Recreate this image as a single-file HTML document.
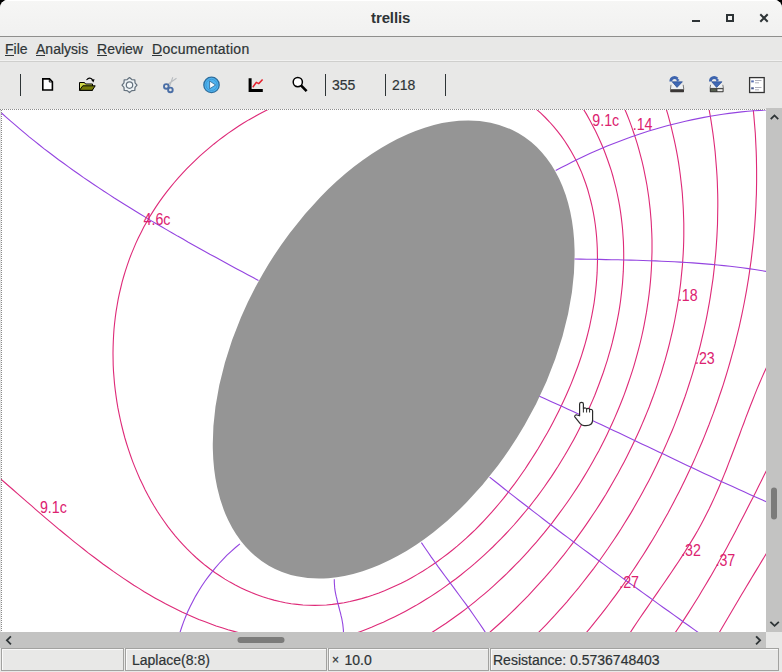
<!DOCTYPE html>
<html><head><meta charset="utf-8">
<style>
html,body{margin:0;padding:0;width:782px;height:672px;overflow:hidden;background:#000;}
body{position:relative;font-family:"Liberation Sans",sans-serif;color:#2e3436;-webkit-text-stroke:0.2px #2e3436;}
#win{position:absolute;left:0;top:0;width:782px;height:672px;background:#e8e8e7;border-radius:8px 8px 0 0;overflow:hidden;}
#title{position:absolute;left:0;top:0;width:782px;height:36px;background:linear-gradient(#f6f6f5,#f1f1f0);border-bottom:1px solid #8f8f8d;box-shadow:inset 0 1px 0 #fff;}
#title .t{position:absolute;left:371px;top:9px;font-weight:bold;font-size:15px;color:#2e3436;letter-spacing:-0.1px;-webkit-text-stroke:0;}
#menu{position:absolute;left:0;top:37px;width:782px;height:24px;background:#e8e8e7;border-bottom:1px solid #cfcfcd;box-shadow:inset 0 -1px 0 #f2f2f1;}
#menu span{position:absolute;top:4px;font-size:14px;color:#2e3436;}
#menu u{text-decoration:none;position:relative;}
#menu u:after{content:"";position:absolute;left:0;right:0;bottom:1px;height:1px;background:#2e3436;}
#tool{position:absolute;left:0;top:62px;width:782px;height:47px;background:#e8e8e7;}
.sep{position:absolute;top:74px;width:1px;height:22px;background:#2e3436;}
.num{position:absolute;top:77px;font-size:14px;color:#2e3436;}
#canvas{position:absolute;left:0;top:109px;width:766px;height:523px;background:#fff;}
#vs{position:absolute;left:766px;top:108px;width:16px;height:524px;background:#c3c3c2;}
#hs{position:absolute;left:0;top:632px;width:766px;height:16px;background:#c3c3c2;}
#corner{position:absolute;left:766px;top:632px;width:16px;height:16px;background:#e8e8e7;}
#status{position:absolute;left:0;top:648px;width:782px;height:24px;background:#e8e8e7;}
.cell{position:absolute;top:0px;height:21px;border:1px solid #a2a2a0;background:#e8e8e7;font-size:14px;line-height:20px;box-sizing:content-box;box-shadow:inset 1px 1px 0 #fafafa;}
.cell span{position:absolute;top:1px;}
svg{position:absolute;left:0;top:0;}
</style></head><body>
<div id="win">
 <div id="title"><span class="t">trellis</span></div>
 <div id="menu">
  <span style="left:5px"><u>F</u>ile</span>
  <span style="left:36px"><u>A</u>nalysis</span>
  <span style="left:97px"><u>R</u>eview</span>
  <span style="left:152px;letter-spacing:0.25px"><u>D</u>ocumentation</span>
 </div>
 <div id="tool"></div>
 <div class="sep" style="left:20px"></div>
 <div class="sep" style="left:325px"></div>
 <div class="sep" style="left:385px"></div>
 <div class="sep" style="left:445px"></div>
 <div class="num" style="left:332px">355</div>
 <div class="num" style="left:392px">218</div>

 <svg width="782" height="110" viewBox="0 0 782 110" style="position:absolute;left:0;top:0">
  <!-- title buttons -->
  <rect x="692" y="20" width="8" height="2" fill="#2e3436"/>
  <rect x="727" y="15" width="6" height="6" fill="none" stroke="#2e3436" stroke-width="2"/>
  <path d="M761,15 L767,21 M767,15 L761,21" stroke="#2e3436" stroke-width="2" stroke-linecap="square"/>
  <!-- new doc -->
  <path d="M42.8,78.9 L49.5,78.9 L52.4,81.8 L52.4,90 L42.8,90 Z" fill="#fff" stroke="#000" stroke-width="1.6" stroke-linejoin="miter"/>
  <path d="M49.3,79 L49.3,82 L52.3,82" fill="none" stroke="#000" stroke-width="0.9"/>
  <!-- open folder -->
  <path d="M79.5,82.5 L84.5,82.5 L85.5,84 L92.5,84 L92.5,90.3 L79.5,90.3 Z" fill="#d0d84a" stroke="#000" stroke-width="1"/>
  <path d="M79.5,90.3 L82.8,85.8 L95.2,85.8 L92.3,90.3 Z" fill="#767c08" stroke="#000" stroke-width="1"/>
  <path d="M86.5,80 Q89.5,76.5 92.6,79.6" fill="none" stroke="#000" stroke-width="1.1"/>
  <path d="M91,79.6 L94.6,79.2 L93.4,82.4 Z" fill="#000"/>
  <!-- gear -->
  <g transform="translate(129.5,85.1)" stroke="#66737f" stroke-width="1.25" stroke-linejoin="round">
   <path d="M0.00,-7.50 L2.30,-5.54 L5.30,-5.30 L5.54,-2.30 L7.50,0.00 L5.54,2.30 L5.30,5.30 L2.30,5.54 L0.00,7.50 L-2.30,5.54 L-5.30,5.30 L-5.54,2.30 L-7.50,0.00 L-5.54,-2.30 L-5.30,-5.30 L-2.30,-5.54 Z" fill="#eef3f6"/>
   <circle cx="0" cy="0" r="3.2" fill="#f4f8fa"/>
  </g>
  <!-- scissors -->
  <path d="M167.5,84.5 L176.5,78.2 M169.5,86.5 L172.8,77.2" stroke="#b8bcc0" stroke-width="1.1" fill="none"/>
  <circle cx="166.3" cy="86.4" r="2.3" fill="none" stroke="#4a6ea6" stroke-width="1.9"/>
  <circle cx="170.4" cy="89.9" r="2.3" fill="none" stroke="#4a6ea6" stroke-width="1.9"/>
  <!-- play -->
  <circle cx="211.5" cy="84.9" r="7.7" fill="#4fb3ef" stroke="#2f6f9e" stroke-width="1.3"/>
  <circle cx="211.5" cy="84.9" r="5.6" fill="none" stroke="#3d9ad6" stroke-width="1"/>
  <path d="M209.6,81 L215.6,85 L209.6,88.8 Z" fill="#f4fbff" stroke="#2d6590" stroke-width="0.8" stroke-linejoin="round"/>
  <!-- chart -->
  <path d="M250.1,78.2 L250.1,90.4 L262.8,90.4" fill="none" stroke="#000" stroke-width="3"/>
  <path d="M252.8,87.3 L256.3,82.4 L258.8,83.6 L262.6,79.5" fill="none" stroke="#e4202c" stroke-width="1.5"/>
  <!-- magnifier -->
  <circle cx="297.8" cy="82.1" r="4.6" fill="#fff" stroke="#000" stroke-width="1.5"/>
  <path d="M301,85.3 L306.6,91.1" stroke="#000" stroke-width="2.6"/>
  <!-- save 1 -->
  <g transform="translate(0,0)">
   <path d="M671,84.8 L670.4,89.6 L683.8,89.6 L683.2,84.8" fill="#eef0f2" stroke="#6a6a6a" stroke-width="0.9"/>
   <rect x="670.2" y="89.4" width="13.8" height="2.8" rx="0.6" fill="#3b3736"/>
   <path d="M670.8,81.4 C670.8,78 674.5,76.2 677.6,78.8" fill="none" stroke="#3d64ae" stroke-width="2.8"/>
   <path d="M672.2,81.8 L682.4,81.8 L677,87.4 Z" fill="#3f68b4" stroke="#2a4c90" stroke-width="0.7" stroke-linejoin="round"/>
   <path d="M676.2,77.6 L679.6,80 L676.8,82" fill="#3f68b4"/>
  </g>
  <!-- save 2 -->
  <g transform="translate(39.6,0)">
   <path d="M671,84.8 L670.4,88.4 L683.8,88.4 L683.2,84.8" fill="#eef0f2" stroke="#6a6a6a" stroke-width="0.9"/>
   <rect x="670.2" y="88.2" width="13.8" height="4" rx="0.6" fill="#3b3b39"/>
   <rect x="671.4" y="89.2" width="5.4" height="2" fill="#56604f"/>
   <rect x="677.8" y="89.2" width="5.2" height="2" fill="#f2f2f2"/>
   <path d="M670.8,81.4 C670.8,78 674.5,76.2 677.6,78.8" fill="none" stroke="#3d64ae" stroke-width="2.8"/>
   <path d="M672.2,81.8 L682.4,81.8 L677,87.4 Z" fill="#3f68b4" stroke="#2a4c90" stroke-width="0.7" stroke-linejoin="round"/>
   <path d="M676.2,77.6 L679.6,80 L676.8,82" fill="#3f68b4"/>
  </g>
  <!-- list -->
  <rect x="749.6" y="77.6" width="14.6" height="14.9" fill="#fff" stroke="#333" stroke-width="1.3"/>
  <rect x="751.2" y="80.4" width="2.6" height="2" fill="#5a70b0"/>
  <rect x="751.2" y="87.3" width="2.6" height="2" fill="#4a5a90"/>
  <path d="M755,80.5 L761.5,80.5 M755,82.8 L759,82.8 M755,87.5 L761.5,87.5 M755,89.8 L759,89.8" stroke="#9a9aa8" stroke-width="0.8"/>
 </svg>
 <div id="canvas"></div>
 <div id="vs"></div>
 <div id="hs"></div>
 <div id="corner"></div>

 <svg width="782" height="672" viewBox="0 0 782 672" style="position:absolute;left:0;top:0">
  <g fill="none" stroke="#2e3436" stroke-width="1.8" stroke-linecap="square">
   <path d="M771.4,118.5 L774.5,115.4 L777.6,118.5"/>
   <path d="M771,622.4 L774.6,625.8 L778.2,622.4"/>
   <path d="M10.3,636.9 L6.9,640.3 L10.3,643.7"/>
   <path d="M756.7,636.9 L760.1,640.3 L756.7,643.7"/>
  </g>
  <rect x="771" y="487.5" width="6" height="32" rx="3" fill="#7b7b7a"/>
  <rect x="237.5" y="637" width="47" height="6" rx="3" fill="#7b7b7a"/>
 </svg>
 <div id="status">
  <div class="cell" style="left:1px;width:121px"></div>
  <div class="cell" style="left:125px;width:200px"><span style="left:6px">Laplace(8:8)</span></div>
  <div class="cell" style="left:328px;width:159px"><span style="left:3px;font-size:12px;top:1px">&#215;</span><span style="left:15.5px">10.0</span></div>
  <div class="cell" style="left:490px;width:287px"><span style="left:2px">Resistance: 0.5736748403</span></div>
 </div>
 <svg width="782" height="672" viewBox="0 0 782 672">
  <defs><clipPath id="cc"><rect x="0" y="110" width="766" height="522"/></clipPath></defs>
  <g clip-path="url(#cc)">
   <ellipse cx="393.7" cy="349.5" rx="249.7" ry="151.2" transform="rotate(-60 393.7 349.5)" fill="#959595"/>
   <g fill="none" stroke-width="1.1">
<path d="M536.1,109.0 L540.8,113.2 L545.3,117.5 L549.6,122.0 L553.7,126.6 L557.6,131.3 L561.3,136.1 L564.7,141.0 L568.0,146.1 L571.1,151.2 L574.0,156.4 L576.8,161.8 L579.3,167.2 L581.7,172.6 L583.8,178.2 L585.8,183.8 L587.7,189.5 L589.3,195.3 L590.8,201.0 L592.2,206.9 L593.4,212.8 L594.4,218.7 L595.3,224.7 L596.0,230.6 L596.6,236.7 L597.0,242.7 L597.3,248.7 L597.4,254.8 L597.5,260.8 L597.3,266.8 L597.1,272.9 L596.7,278.9 L596.2,284.9 L595.6,290.9 L594.9,296.8 L594.1,302.8 L593.1,308.7 L592.0,314.6 L590.8,320.5 L589.6,326.3 L588.2,332.2 L586.7,338.0 L585.1,343.8 L583.4,349.5 L581.6,355.3 L579.7,361.0 L577.7,366.7 L575.6,372.3 L573.4,378.0 L571.2,383.6 L568.8,389.2 L566.4,394.7 L563.9,400.2 L561.3,405.7 L558.7,411.2 L556.0,416.6 L553.2,422.0 L550.3,427.4 L547.4,432.7 L544.3,438.0 L541.3,443.2 L538.2,448.5 L535.0,453.6 L531.7,458.8 L528.4,463.9 L525.1,469.0 L521.6,474.0 L518.1,479.0 L514.6,483.9 L510.9,488.7 L507.2,493.6 L503.5,498.3 L499.6,503.0 L495.7,507.6 L491.8,512.2 L487.7,516.7 L483.6,521.1 L479.4,525.5 L475.1,529.8 L470.7,534.0 L466.3,538.1 L461.8,542.1 L457.2,546.1 L452.5,550.0 L447.8,553.7 L442.9,557.4 L438.0,561.0 L433.0,564.5 L427.9,567.9 L422.7,571.2 L417.4,574.4 L412.1,577.4 L406.7,580.4 L401.2,583.2 L395.7,585.8 L390.1,588.3 L384.5,590.7 L378.9,592.9 L373.1,595.0 L367.4,596.9 L361.6,598.6 L355.8,600.1 L350.0,601.5 L344.1,602.7 L338.2,603.6 L332.4,604.4 L326.5,605.0 L320.6,605.3 L314.7,605.4 L308.8,605.3 L302.9,605.0 L297.1,604.4 L291.2,603.7 L285.4,602.7 L279.7,601.5 L273.9,600.1 L268.2,598.5 L262.6,596.7 L257.0,594.7 L251.4,592.6 L246.0,590.2 L240.6,587.7 L235.3,585.0 L230.0,582.1 L224.9,579.1 L219.8,575.8 L214.8,572.5 L210.0,569.0 L205.2,565.3 L200.6,561.5 L196.0,557.5 L191.6,553.4 L187.3,549.2 L183.2,544.8 L179.1,540.4 L175.2,535.8 L171.4,531.1 L167.7,526.3 L164.1,521.3 L160.6,516.3 L157.3,511.2 L154.1,506.0 L151.0,500.7 L148.0,495.3 L145.2,489.9 L142.5,484.3 L139.8,478.7 L137.4,473.1 L135.0,467.4 L132.7,461.6 L130.6,455.8 L128.6,449.9 L126.7,444.0 L124.9,438.0 L123.3,432.0 L121.8,426.0 L120.4,420.0 L119.1,413.9 L117.9,407.9 L116.9,401.8 L116.0,395.7 L115.2,389.6 L114.5,383.6 L114.0,377.5 L113.5,371.4 L113.2,365.3 L113.1,359.3 L113.0,353.2 L113.1,347.2 L113.3,341.2 L113.6,335.2 L114.0,329.2 L114.6,323.2 L115.3,317.3 L116.1,311.4 L117.1,305.5 L118.1,299.6 L119.3,293.8 L120.7,288.0 L122.1,282.2 L123.7,276.5 L125.4,270.9 L127.3,265.2 L129.2,259.6 L131.3,254.1 L133.6,248.6 L135.9,243.1 L138.4,237.7 L141.1,232.4 L143.8,227.1 L146.7,221.9 L149.7,216.7 L152.9,211.6 L156.1,206.6 L159.5,201.6 L163.1,196.7 L166.7,191.9 L170.5,187.1 L174.3,182.5 L178.3,177.9 L182.4,173.4 L186.6,168.9 L190.9,164.6 L195.3,160.3 L199.7,156.1 L204.3,152.1 L209.0,148.1 L213.7,144.2 L218.5,140.4 L223.4,136.7 L228.3,133.1 L233.3,129.7 L238.4,126.3 L243.5,123.0 L248.7,119.9 L254.0,116.9 L259.3,114.0 L264.6,111.2 L270.0,108.5" stroke="#de2a78"/>
<path d="M583.3,109.0 L586.6,114.4 L589.7,119.9 L592.6,125.4 L595.5,131.0 L598.1,136.6 L600.7,142.2 L603.1,147.8 L605.3,153.5 L607.4,159.2 L609.4,165.0 L611.3,170.7 L613.0,176.5 L614.5,182.3 L616.0,188.2 L617.3,194.0 L618.5,199.9 L619.6,205.8 L620.5,211.7 L621.3,217.6 L622.0,223.6 L622.6,229.5 L623.0,235.5 L623.4,241.4 L623.6,247.4 L623.7,253.4 L623.7,259.4 L623.5,265.4 L623.3,271.4 L622.9,277.4 L622.5,283.4 L621.9,289.3 L621.2,295.3 L620.5,301.3 L619.6,307.3 L618.6,313.3 L617.5,319.2 L616.3,325.2 L615.0,331.1 L613.6,337.0 L612.2,342.9 L610.6,348.8 L608.9,354.7 L607.2,360.6 L605.3,366.4 L603.4,372.2 L601.3,378.0 L599.2,383.7 L597.0,389.5 L594.8,395.2 L592.4,400.9 L589.9,406.5 L587.4,412.1 L584.8,417.7 L582.1,423.3 L579.4,428.8 L576.6,434.3 L573.7,439.7 L570.7,445.1 L567.6,450.5 L564.5,455.8 L561.3,461.0 L558.1,466.3 L554.8,471.4 L551.4,476.6 L547.9,481.6 L544.4,486.7 L540.8,491.7 L537.2,496.6 L533.4,501.5 L529.7,506.3 L525.8,511.0 L521.9,515.7 L517.9,520.4 L513.9,525.0 L509.8,529.5 L505.6,534.0 L501.4,538.4 L497.1,542.7 L492.8,547.0 L488.4,551.2 L483.9,555.3 L479.4,559.4 L474.9,563.4 L470.2,567.3 L465.5,571.2 L460.8,575.0 L456.0,578.7 L451.1,582.3 L446.2,585.9 L441.3,589.4 L436.3,592.8 L431.2,596.1 L426.1,599.3 L420.9,602.5 L415.7,605.6 L410.4,608.5 L405.1,611.4 L399.7,614.3 L394.3,617.0 L388.8,619.6 L383.3,622.2 L377.7,624.6 L372.1,627.0 L366.5,629.2 L360.8,631.4 L355.0,633.5" stroke="#de2a78"/>
<path d="M-1.0,477.5 L3.6,481.5 L8.2,485.5 L12.8,489.5 L17.5,493.6 L22.1,497.6 L26.7,501.7 L31.4,505.7 L36.1,509.8 L40.8,513.8 L45.4,517.8 L50.2,521.8 L54.9,525.8 L59.6,529.8 L64.4,533.7 L69.2,537.7 L74.0,541.6 L78.8,545.4 L83.7,549.3 L88.5,553.1 L93.4,556.8 L98.4,560.5 L103.3,564.2 L108.3,567.8 L113.3,571.4 L118.4,574.9 L123.5,578.4 L128.6,581.8 L133.8,585.2 L139.0,588.4 L144.2,591.7 L149.4,594.8 L154.8,597.9 L160.1,600.8 L165.5,603.8 L170.9,606.6 L176.4,609.3 L181.9,612.0 L187.5,614.5 L193.1,617.0 L198.8,619.4 L204.5,621.6 L210.3,623.8 L216.1,625.9 L222.0,627.8 L228.0,629.7 L234.0,631.4 L240.0,633.0" stroke="#de2a78"/>
<path d="M624.7,109.0 L627.1,114.8 L629.4,120.6 L631.5,126.4 L633.5,132.2 L635.5,138.1 L637.3,143.9 L639.0,149.8 L640.6,155.8 L642.1,161.7 L643.5,167.6 L644.7,173.6 L645.9,179.6 L647.0,185.5 L647.9,191.5 L648.8,197.5 L649.5,203.6 L650.2,209.6 L650.7,215.6 L651.2,221.6 L651.5,227.7 L651.8,233.7 L652.0,239.8 L652.0,245.8 L652.0,251.9 L651.8,257.9 L651.6,263.9 L651.3,270.0 L650.9,276.0 L650.4,282.1 L649.8,288.1 L649.1,294.1 L648.3,300.1 L647.4,306.2 L646.5,312.2 L645.4,318.1 L644.3,324.1 L643.1,330.1 L641.8,336.0 L640.4,342.0 L638.9,347.9 L637.3,353.8 L635.7,359.7 L634.0,365.6 L632.2,371.4 L630.3,377.2 L628.3,383.0 L626.3,388.8 L624.2,394.6 L622.0,400.3 L619.7,406.0 L617.3,411.7 L614.9,417.4 L612.4,423.0 L609.8,428.6 L607.2,434.2 L604.5,439.7 L601.7,445.2 L598.9,450.7 L595.9,456.1 L592.9,461.5 L589.9,466.8 L586.7,472.2 L583.6,477.4 L580.3,482.7 L577.0,487.9 L573.6,493.0 L570.1,498.2 L566.6,503.2 L563.0,508.3 L559.4,513.2 L555.7,518.2 L552.0,523.1 L548.1,527.9 L544.3,532.7 L540.3,537.4 L536.4,542.1 L532.3,546.7 L528.2,551.3 L524.1,555.8 L519.9,560.3 L515.6,564.7 L511.3,569.0 L507.0,573.3 L502.6,577.5 L498.1,581.7 L493.6,585.8 L489.1,589.9 L484.5,593.8 L479.8,597.7 L475.1,601.6 L470.4,605.4 L465.6,609.1 L460.8,612.7 L455.9,616.3 L451.0,619.8 L446.1,623.2 L441.1,626.5 L436.1,629.8 L431.0,633.0" stroke="#de2a78"/>
<path d="M666.2,109.0 L668.0,114.9 L669.6,120.9 L671.2,126.9 L672.6,132.9 L674.0,138.9 L675.3,144.9 L676.5,150.9 L677.6,156.9 L678.6,162.9 L679.5,169.0 L680.3,175.0 L681.0,181.0 L681.7,187.1 L682.3,193.1 L682.7,199.2 L683.1,205.2 L683.4,211.3 L683.6,217.3 L683.8,223.4 L683.8,229.4 L683.8,235.5 L683.7,241.5 L683.5,247.5 L683.2,253.6 L682.8,259.6 L682.4,265.6 L681.8,271.6 L681.2,277.6 L680.6,283.6 L679.8,289.6 L679.0,295.6 L678.1,301.6 L677.1,307.6 L676.0,313.5 L674.9,319.5 L673.7,325.4 L672.4,331.3 L671.0,337.2 L669.6,343.1 L668.1,349.0 L666.5,354.8 L664.9,360.7 L663.1,366.5 L661.4,372.3 L659.5,378.1 L657.6,383.8 L655.6,389.6 L653.6,395.3 L651.4,401.0 L649.3,406.7 L647.0,412.4 L644.7,418.0 L642.3,423.6 L639.9,429.2 L637.4,434.8 L634.8,440.3 L632.2,445.8 L629.5,451.3 L626.8,456.8 L624.0,462.2 L621.1,467.6 L618.2,473.0 L615.2,478.3 L612.2,483.6 L609.1,488.9 L606.0,494.2 L602.8,499.4 L599.5,504.6 L596.2,509.7 L592.8,514.8 L589.4,519.9 L586.0,524.9 L582.5,529.9 L578.9,534.9 L575.3,539.8 L571.6,544.7 L567.9,549.5 L564.2,554.3 L560.3,559.1 L556.5,563.8 L552.6,568.5 L548.6,573.1 L544.7,577.7 L540.6,582.2 L536.5,586.7 L532.4,591.2 L528.3,595.6 L524.1,599.9 L519.8,604.2 L515.5,608.5 L511.2,612.7 L506.8,616.9 L502.4,621.0 L498.0,625.0 L493.5,629.0 L489.0,633.0" stroke="#de2a78"/>
<path d="M709.0,109.0 L710.1,115.0 L711.1,121.1 L712.0,127.1 L712.9,133.2 L713.7,139.3 L714.4,145.3 L715.1,151.4 L715.6,157.5 L716.1,163.6 L716.6,169.7 L717.0,175.7 L717.3,181.8 L717.5,187.9 L717.7,194.0 L717.8,200.1 L717.8,206.2 L717.7,212.3 L717.6,218.3 L717.5,224.4 L717.2,230.5 L716.9,236.6 L716.5,242.6 L716.1,248.7 L715.6,254.7 L715.0,260.8 L714.4,266.8 L713.7,272.9 L713.0,278.9 L712.1,284.9 L711.2,290.9 L710.3,296.9 L709.3,302.9 L708.2,308.9 L707.1,314.9 L705.9,320.8 L704.6,326.8 L703.3,332.7 L701.9,338.6 L700.5,344.6 L699.0,350.5 L697.4,356.3 L695.8,362.2 L694.1,368.0 L692.4,373.9 L690.6,379.7 L688.7,385.5 L686.8,391.3 L684.9,397.0 L682.8,402.8 L680.7,408.5 L678.6,414.2 L676.4,419.9 L674.2,425.6 L671.9,431.2 L669.5,436.8 L667.1,442.4 L664.6,448.0 L662.1,453.6 L659.5,459.1 L656.9,464.6 L654.2,470.1 L651.5,475.5 L648.7,480.9 L645.8,486.3 L642.9,491.7 L640.0,497.0 L637.0,502.3 L634.0,507.6 L630.9,512.9 L627.7,518.1 L624.5,523.3 L621.3,528.5 L618.0,533.6 L614.6,538.7 L611.2,543.7 L607.8,548.8 L604.3,553.8 L600.8,558.7 L597.2,563.7 L593.6,568.6 L589.9,573.4 L586.2,578.2 L582.4,583.0 L578.6,587.8 L574.7,592.5 L570.8,597.1 L566.9,601.8 L562.9,606.3 L558.8,610.9 L554.8,615.4 L550.6,619.9 L546.5,624.3 L542.3,628.7 L538.0,633.0" stroke="#de2a78"/>
<path d="M753.2,109.0 L753.8,115.1 L754.3,121.2 L754.8,127.2 L755.3,133.3 L755.6,139.4 L755.9,145.5 L756.2,151.6 L756.4,157.7 L756.5,163.7 L756.6,169.8 L756.6,175.9 L756.6,182.0 L756.5,188.0 L756.4,194.1 L756.1,200.2 L755.9,206.3 L755.6,212.3 L755.2,218.4 L754.8,224.4 L754.3,230.5 L753.8,236.5 L753.2,242.6 L752.5,248.6 L751.8,254.6 L751.1,260.6 L750.2,266.6 L749.4,272.6 L748.5,278.6 L747.5,284.6 L746.5,290.6 L745.4,296.6 L744.3,302.5 L743.1,308.5 L741.9,314.4 L740.6,320.4 L739.3,326.3 L737.9,332.2 L736.4,338.1 L735.0,344.0 L733.4,349.8 L731.8,355.7 L730.2,361.5 L728.5,367.3 L726.8,373.2 L725.0,379.0 L723.2,384.8 L721.3,390.5 L719.3,396.3 L717.4,402.0 L715.3,407.7 L713.3,413.4 L711.1,419.1 L709.0,424.8 L706.7,430.5 L704.5,436.1 L702.2,441.7 L699.8,447.3 L697.4,452.9 L695.0,458.4 L692.5,464.0 L689.9,469.5 L687.3,475.0 L684.7,480.5 L682.0,485.9 L679.3,491.4 L676.5,496.8 L673.7,502.2 L670.9,507.5 L668.0,512.9 L665.0,518.2 L662.1,523.5 L659.0,528.7 L656.0,534.0 L652.9,539.2 L649.7,544.4 L646.5,549.6 L643.3,554.7 L640.0,559.8 L636.7,564.9 L633.3,570.0 L629.9,575.0 L626.5,580.0 L623.0,585.0 L619.5,589.9 L615.9,594.8 L612.3,599.7 L608.7,604.5 L605.0,609.4 L601.3,614.2 L597.5,618.9 L593.7,623.6 L589.9,628.3 L586.0,633.0" stroke="#de2a78"/>
<path d="M767.0,366.5 L764.4,372.0 L761.9,377.6 L759.5,383.3 L757.1,388.9 L754.8,394.6 L752.6,400.3 L750.3,406.0 L748.1,411.7 L745.9,417.4 L743.8,423.2 L741.6,428.9 L739.5,434.7 L737.3,440.5 L735.2,446.2 L733.0,452.0 L730.8,457.7 L728.6,463.4 L726.4,469.2 L724.1,474.9 L721.8,480.5 L719.4,486.2 L717.0,491.8 L714.5,497.4 L711.9,503.0 L709.3,508.5 L706.5,514.0 L703.7,519.5 L700.8,524.9 L697.9,530.3 L694.8,535.6 L691.6,540.9 L688.4,546.1 L685.2,551.4 L681.8,556.6 L678.5,561.7 L675.0,566.9 L671.6,572.0 L668.1,577.1 L664.6,582.2 L661.1,587.3 L657.6,592.4 L654.1,597.4 L650.6,602.5 L647.1,607.6 L643.6,612.6 L640.1,617.7 L636.7,622.8 L633.3,627.9 L630.0,633.0" stroke="#de2a78"/>
<path d="M767.0,469.5 L764.2,475.1 L761.4,480.7 L758.6,486.3 L755.8,491.9 L753.0,497.5 L750.1,503.1 L747.3,508.6 L744.4,514.2 L741.5,519.8 L738.6,525.3 L735.7,530.9 L732.8,536.4 L729.8,541.9 L726.9,547.4 L723.9,552.9 L720.8,558.3 L717.8,563.8 L714.7,569.2 L711.6,574.7 L708.4,580.1 L705.2,585.5 L702.0,590.8 L698.8,596.2 L695.5,601.5 L692.2,606.8 L688.8,612.1 L685.4,617.4 L682.0,622.6 L678.5,627.8 L675.0,633.0" stroke="#de2a78"/>
<path d="M767.0,552.5 L764.4,556.7 L761.9,560.9 L759.3,565.2 L756.8,569.4 L754.2,573.6 L751.7,577.8 L749.1,582.1 L746.6,586.3 L744.1,590.5 L741.5,594.8 L739.0,599.0 L736.5,603.2 L734.0,607.5 L731.5,611.7 L729.0,616.0 L726.5,620.2 L724.0,624.5 L721.5,628.7 L719.0,633.0" stroke="#de2a78"/>
<path d="M1.5,113.0 L6.1,117.1 L10.7,121.2 L15.4,125.2 L20.0,129.2 L24.8,133.2 L29.5,137.1 L34.3,140.9 L39.1,144.8 L43.9,148.6 L48.8,152.3 L53.7,156.0 L58.6,159.7 L63.6,163.3 L68.5,166.9 L73.5,170.5 L78.6,174.0 L83.6,177.6 L88.7,181.0 L93.8,184.5 L98.9,187.9 L104.0,191.3 L109.2,194.6 L114.3,198.0 L119.5,201.3 L124.7,204.5 L130.0,207.8 L135.2,211.0 L140.5,214.2 L145.7,217.4 L151.0,220.6 L156.3,223.7 L161.6,226.8 L166.9,229.9 L172.3,233.0 L177.6,236.1 L183.0,239.1 L188.3,242.2 L193.7,245.2 L199.1,248.2 L204.5,251.2 L209.8,254.2 L215.2,257.1 L220.6,260.1 L226.0,263.0 L231.4,266.0 L236.9,268.9 L242.3,271.8 L247.7,274.7 L253.1,277.6 L258.5,280.5" stroke="#9444e0"/>
<path d="M239.9,543.8 L235.5,547.5 L231.2,551.3 L227.0,555.2 L223.0,559.3 L219.1,563.5 L215.3,567.9 L211.7,572.3 L208.2,576.9 L204.8,581.5 L201.6,586.3 L198.5,591.2 L195.6,596.1 L192.9,601.2 L190.3,606.3 L187.8,611.5 L185.6,616.8 L183.5,622.1 L181.6,627.5 L179.8,633.0" stroke="#9444e0"/>
<path d="M334.3,579.2 L334.3,582.1 L334.5,585.0 L334.7,587.9 L335.1,590.8 L335.6,593.6 L336.2,596.4 L336.9,599.2 L337.5,602.0 L338.3,604.8 L339.0,607.5 L339.7,610.3 L340.5,613.1 L341.1,615.9 L341.8,618.7 L342.3,621.5 L342.8,624.4 L343.1,627.2 L343.4,630.1 L343.5,633.0" stroke="#9444e0"/>
<path d="M421.4,542.6 L424.7,547.5 L428.0,552.3 L431.3,557.1 L434.7,561.8 L438.1,566.6 L441.6,571.3 L445.0,576.0 L448.5,580.7 L452.0,585.4 L455.5,590.1 L458.9,594.8 L462.4,599.5 L465.9,604.2 L469.3,608.9 L472.7,613.7 L476.0,618.5 L479.3,623.3 L482.6,628.1 L485.8,633.0" stroke="#9444e0"/>
<path d="M539.4,396.3 L545.1,398.8 L550.9,401.4 L556.6,404.0 L562.3,406.6 L568.0,409.2 L573.7,411.8 L579.4,414.4 L585.1,417.1 L590.8,419.7 L596.5,422.4 L602.1,425.0 L607.8,427.7 L613.5,430.4 L619.2,433.1 L624.8,435.8 L630.5,438.5 L636.2,441.2 L641.8,443.9 L647.5,446.6 L653.2,449.3 L658.8,452.0 L664.5,454.6 L670.1,457.3 L675.8,460.0 L681.5,462.7 L687.2,465.4 L692.8,468.1 L698.5,470.8 L704.2,473.4 L709.9,476.1 L715.6,478.7 L721.2,481.4 L726.9,484.0 L732.6,486.6 L738.4,489.2 L744.1,491.8 L749.8,494.4 L755.5,496.9 L761.3,499.5 L767.0,502.0" stroke="#9444e0"/>
<path d="M489.6,477.1 L494.5,481.0 L499.3,484.8 L504.2,488.7 L509.1,492.6 L514.0,496.4 L518.9,500.2 L523.8,504.0 L528.7,507.8 L533.6,511.6 L538.6,515.4 L543.5,519.2 L548.4,523.0 L553.4,526.7 L558.3,530.5 L563.3,534.2 L568.3,537.9 L573.3,541.7 L578.2,545.4 L583.2,549.1 L588.2,552.8 L593.2,556.5 L598.2,560.2 L603.2,563.9 L608.2,567.6 L613.2,571.2 L618.3,574.9 L623.3,578.6 L628.3,582.2 L633.4,585.9 L638.4,589.5 L643.4,593.1 L648.5,596.8 L653.5,600.4 L658.6,604.1 L663.6,607.7 L668.7,611.3 L673.7,614.9 L678.8,618.5 L683.8,622.2 L688.9,625.8 L693.9,629.4 L699.0,633.0" stroke="#9444e0"/>
<path d="M574.5,259.0 L580.7,259.1 L586.9,259.2 L593.2,259.3 L599.4,259.4 L605.6,259.6 L611.9,259.7 L618.1,259.8 L624.3,260.0 L630.5,260.1 L636.8,260.3 L643.0,260.5 L649.2,260.7 L655.5,260.9 L661.7,261.2 L667.9,261.5 L674.1,261.8 L680.3,262.1 L686.6,262.5 L692.8,262.9 L699.0,263.4 L705.2,263.9 L711.4,264.4 L717.6,265.0 L723.8,265.6 L730.0,266.3 L736.2,267.0 L742.3,267.8 L748.5,268.6 L754.7,269.5 L760.8,270.5 L767.0,271.5" stroke="#9444e0"/>
<path d="M555.7,170.6 L561.3,167.6 L567.0,164.7 L572.6,161.8 L578.3,159.0 L584.1,156.3 L589.8,153.6 L595.6,151.1 L601.4,148.6 L607.2,146.1 L613.1,143.7 L619.0,141.5 L624.9,139.2 L630.9,137.1 L636.8,135.0 L642.8,133.0 L648.8,131.1 L654.9,129.3 L660.9,127.5 L667.0,125.8 L673.1,124.2 L679.3,122.7 L685.4,121.2 L691.6,119.9 L697.8,118.6 L704.0,117.4 L710.2,116.3 L716.4,115.2 L722.7,114.3 L729.0,113.4 L735.3,112.6 L741.6,111.9 L747.9,111.3 L754.3,110.8 L760.6,110.4 L767.0,110.0" stroke="#9444e0"/>
   </g>
   <g fill="#dc2270" font-size="13.5" font-family="Liberation Sans, sans-serif">
<text transform="translate(143.60,225.30) scale(0.900,1)" font-size="15.80">4.6c</text>
<text transform="translate(592.32,126.10) scale(0.900,1)" font-size="15.80">9.1c</text>
<text transform="translate(632.74,129.80) scale(0.900,1)" font-size="15.80">.14</text>
<text transform="translate(677.91,300.90) scale(0.900,1)" font-size="15.80">.18</text>
<text transform="translate(694.99,363.80) scale(0.900,1)" font-size="15.80">.23</text>
<text transform="translate(39.92,513.40) scale(0.900,1)" font-size="15.80">9.1c</text>
<text transform="translate(619.21,587.60) scale(0.900,1)" font-size="15.80">.27</text>
<text transform="translate(681.13,555.90) scale(0.900,1)" font-size="15.80">.32</text>
<text transform="translate(715.48,566.20) scale(0.900,1)" font-size="15.80">.37</text>
   </g>
  </g>
  <line x1="0" y1="109.5" x2="766" y2="109.5" stroke="#8c8c8c" stroke-dasharray="1 1"/>
  <line x1="1.5" y1="110" x2="1.5" y2="632" stroke="#8a8a8a" stroke-dasharray="1 1"/>
  <line x1="0.5" y1="110" x2="0.5" y2="632" stroke="#e4e4e4"/>
  <path d="M579.6,415.8 L579.6,404 C579.6,401.8 583.4,401.8 583.4,404 L583.4,408.6 C584.6,407.6 586.4,407.8 586.6,409 C587.6,408 589.4,408.2 589.6,409.6 C590.6,409 592.6,409.4 592.6,411 L592.6,420 C592.6,423.6 590,425.6 586,425.6 L584,425.6 C582,425.6 581,424.6 580,423.4 L574.8,416.8 C574.2,416 575.6,414.4 577,415 Z" fill="#fff" stroke="#2b2b2b" stroke-width="1.2" stroke-linejoin="round"/>
  <path d="M583.4,408.6 L583.4,412.5 M586.6,409 L586.6,412.5 M589.6,409.6 L589.6,412.5" stroke="#2b2b2b" stroke-width="1"/>
 </svg>
</div>
</body></html>
